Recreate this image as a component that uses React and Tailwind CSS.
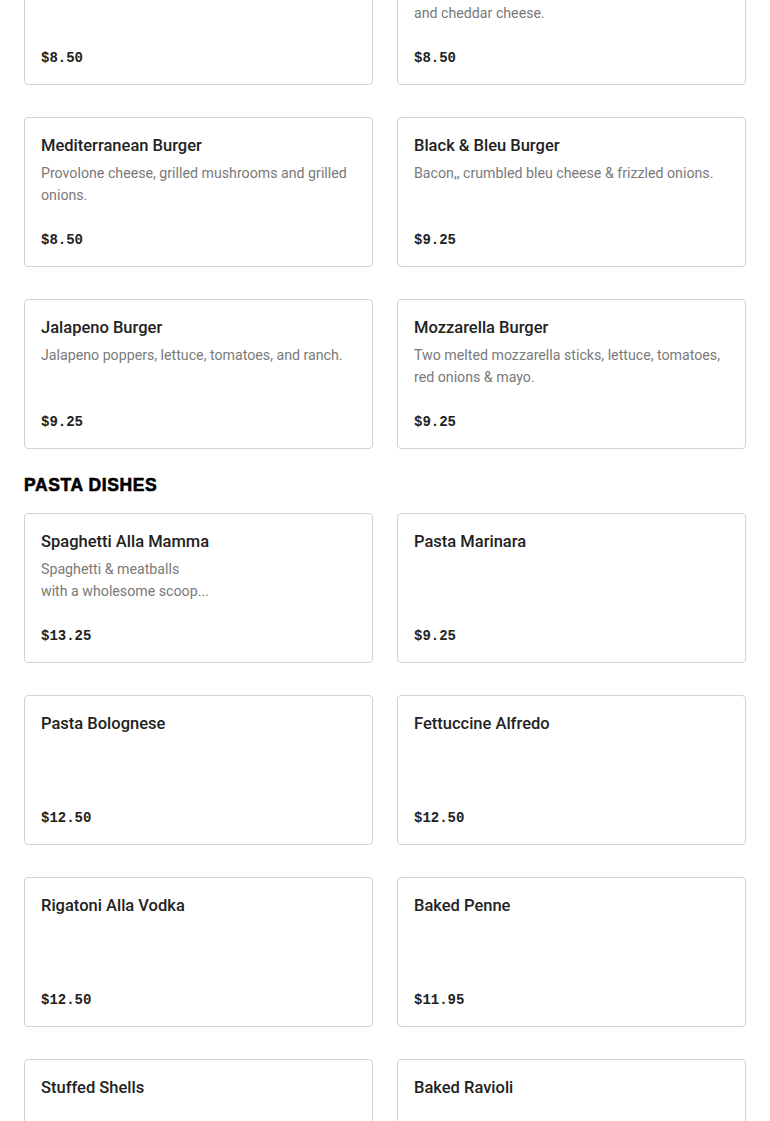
const sections = [
  {
    title: null,
    items: [
      { name: "Classic Burger", desc: "Lettuce, tomatoes, pickles & onions.", price: "$8.50" },
      {
        name: "Cheddar Burger",
        desc: ["Crispy bacon, lettuce, tomatoes, red onions", "and cheddar cheese."],
        price: "$8.50",
      },
      {
        name: "Mediterranean Burger",
        desc: "Provolone cheese, grilled mushrooms and grilled onions.",
        price: "$8.50",
      },
      { name: "Black & Bleu Burger", desc: "Bacon,, crumbled bleu cheese & frizzled onions.", price: "$9.25" },
      { name: "Jalapeno Burger", desc: "Jalapeno poppers, lettuce, tomatoes, and ranch.", price: "$9.25" },
      {
        name: "Mozzarella Burger",
        desc: "Two melted mozzarella sticks, lettuce, tomatoes, red onions & mayo.",
        price: "$9.25",
      },
    ],
  },
  {
    title: "PASTA DISHES",
    items: [
      {
        name: "Spaghetti Alla Mamma",
        desc: ["Spaghetti & meatballs", "with a wholesome scoop..."],
        price: "$13.25",
      },
      { name: "Pasta Marinara", price: "$9.25" },
      { name: "Pasta Bolognese", price: "$12.50" },
      { name: "Fettuccine Alfredo", price: "$12.50" },
      { name: "Rigatoni Alla Vodka", price: "$12.50" },
      { name: "Baked Penne", price: "$11.95" },
      { name: "Stuffed Shells", price: "$12.50" },
      { name: "Baked Ravioli", price: "$12.50" },
    ],
  },
];

const MenuCard = ({ item }) => (
  <div className="flex flex-col h-[150px] bg-white border border-[#d3d3d3] rounded-[4px] px-4 pt-4 pb-4">
    <h3 className="text-[16.5px] leading-6 font-medium text-[#222222] font-['Roboto',sans-serif]">
      {item.name}
    </h3>
    {item.desc && (
      <p className="mt-1 text-[14.2px] leading-[22px] text-[#7a7a7a] font-['Roboto',sans-serif]">
        {Array.isArray(item.desc)
          ? item.desc.map((line) => (
              <span key={line} className="block">
                {line}
              </span>
            ))
          : item.desc}
      </p>
    )}
    <div className="mt-auto text-[14px] leading-5 font-bold text-[#222222] font-['Liberation_Mono',monospace]">
      {item.price}
    </div>
  </div>
);

export default function App() {
  return (
    <div className="bg-white min-h-screen px-6 pb-10 overflow-hidden">
      <div className="-mt-[65px]">
        {sections.map((section, i) => (
          <div key={i}>
            {section.title && (
              <h2 className="mt-6 mb-4 text-[17.5px] leading-6 font-black tracking-[0.6px] text-black [-webkit-text-stroke:0.6px_black] font-['Liberation_Sans',Arial,sans-serif]">
                {section.title}
              </h2>
            )}
            <div className="grid grid-cols-2 gap-x-6 gap-y-8">
              {section.items.map((item) => (
                <MenuCard key={item.name} item={item} />
              ))}
            </div>
          </div>
        ))}
      </div>
    </div>
  );
}
